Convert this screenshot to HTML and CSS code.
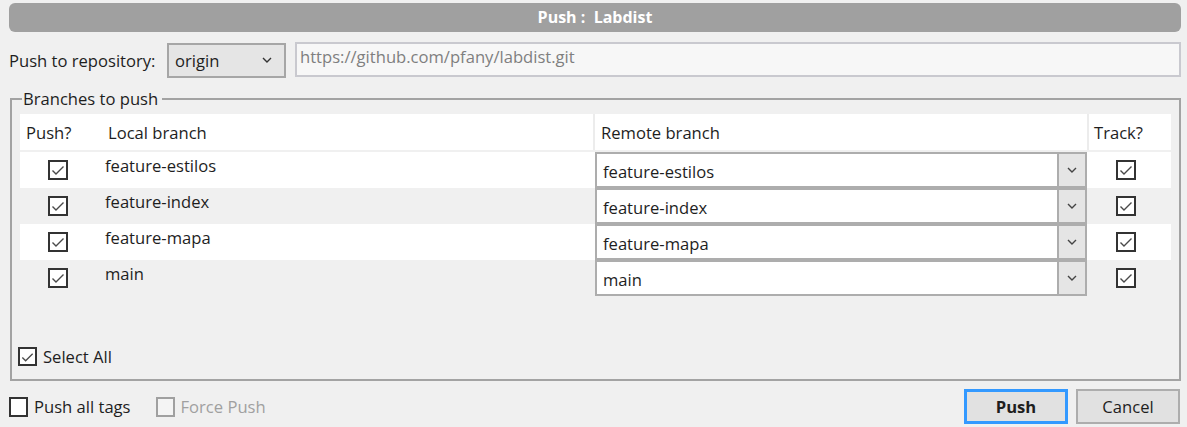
FILE: index.html
```html
<!DOCTYPE html>
<html>
<head>
<meta charset="utf-8">
<link rel="stylesheet" href="styles.css">
</head>
<body>
<div class="dialog">
  <div class="titlebar">Push :&nbsp; Labdist</div>

  <div class="repo-row">
    <span class="repo-label">Push to repository:</span>
    <div class="combo repo-combo">
      <span class="combo-text">origin</span>
      <svg class="chev" width="10" height="6" viewBox="0 0 10 6"><polyline points="1,1 5,5 9,1" fill="none" stroke="#333" stroke-width="1.4"/></svg>
    </div>
    <div class="url">https://github.com/pfany/labdist.git</div>
  </div>

  <fieldset class="group">
    <legend class="legend">Branches to push</legend>
    <div class="table">
      <div class="hrow">
        <div class="hcell c-push">Push?</div>
        <div class="hcell c-local">Local branch</div>
        <div class="hcell c-remote">Remote branch</div>
        <div class="hcell c-track">Track?</div>
      </div>

      <div class="row">
        <div class="cell c-push"><span class="cb checked"><svg viewBox="0 0 16 16"><polyline points="2.5,8.5 6,12 13.5,4.5" fill="none" stroke="#4a4a4a" stroke-width="1.4"/></svg></span></div>
        <div class="cell c-local"><span class="local-name">feature-estilos</span></div>
        <div class="cell c-remote"><div class="rcombo"><span class="rtext">feature-estilos</span><span class="rbtn"><svg width="10" height="6" viewBox="0 0 10 6"><polyline points="1,1 5,5 9,1" fill="none" stroke="#444" stroke-width="1.4"/></svg></span></div></div>
        <div class="cell c-track"><span class="cb checked"><svg viewBox="0 0 16 16"><polyline points="2.5,8.5 6,12 13.5,4.5" fill="none" stroke="#4a4a4a" stroke-width="1.4"/></svg></span></div>
      </div>

      <div class="row alt">
        <div class="cell c-push"><span class="cb checked"><svg viewBox="0 0 16 16"><polyline points="2.5,8.5 6,12 13.5,4.5" fill="none" stroke="#4a4a4a" stroke-width="1.4"/></svg></span></div>
        <div class="cell c-local"><span class="local-name">feature-index</span></div>
        <div class="cell c-remote"><div class="rcombo"><span class="rtext">feature-index</span><span class="rbtn"><svg width="10" height="6" viewBox="0 0 10 6"><polyline points="1,1 5,5 9,1" fill="none" stroke="#444" stroke-width="1.4"/></svg></span></div></div>
        <div class="cell c-track"><span class="cb checked"><svg viewBox="0 0 16 16"><polyline points="2.5,8.5 6,12 13.5,4.5" fill="none" stroke="#4a4a4a" stroke-width="1.4"/></svg></span></div>
      </div>

      <div class="row">
        <div class="cell c-push"><span class="cb checked"><svg viewBox="0 0 16 16"><polyline points="2.5,8.5 6,12 13.5,4.5" fill="none" stroke="#4a4a4a" stroke-width="1.4"/></svg></span></div>
        <div class="cell c-local"><span class="local-name">feature-mapa</span></div>
        <div class="cell c-remote"><div class="rcombo"><span class="rtext">feature-mapa</span><span class="rbtn"><svg width="10" height="6" viewBox="0 0 10 6"><polyline points="1,1 5,5 9,1" fill="none" stroke="#444" stroke-width="1.4"/></svg></span></div></div>
        <div class="cell c-track"><span class="cb checked"><svg viewBox="0 0 16 16"><polyline points="2.5,8.5 6,12 13.5,4.5" fill="none" stroke="#4a4a4a" stroke-width="1.4"/></svg></span></div>
      </div>

      <div class="row alt">
        <div class="cell c-push"><span class="cb checked"><svg viewBox="0 0 16 16"><polyline points="2.5,8.5 6,12 13.5,4.5" fill="none" stroke="#4a4a4a" stroke-width="1.4"/></svg></span></div>
        <div class="cell c-local"><span class="local-name">main</span></div>
        <div class="cell c-remote"><div class="rcombo"><span class="rtext">main</span><span class="rbtn"><svg width="10" height="6" viewBox="0 0 10 6"><polyline points="1,1 5,5 9,1" fill="none" stroke="#444" stroke-width="1.4"/></svg></span></div></div>
        <div class="cell c-track"><span class="cb checked"><svg viewBox="0 0 16 16"><polyline points="2.5,8.5 6,12 13.5,4.5" fill="none" stroke="#4a4a4a" stroke-width="1.4"/></svg></span></div>
      </div>
    </div>

    <div class="select-all">
      <span class="cb checked"><svg viewBox="0 0 16 16"><polyline points="2.5,8.5 6,12 13.5,4.5" fill="none" stroke="#4a4a4a" stroke-width="1.4"/></svg></span>
      <span class="cb-label">Select All</span>
    </div>
  </fieldset>

  <div class="bottom">
    <div class="opt">
      <span class="cb"></span>
      <span class="cb-label">Push all tags</span>
    </div>
    <div class="opt disabled">
      <span class="cb"></span>
      <span class="cb-label">Force Push</span>
    </div>
    <div class="spacer"></div>
    <div class="btn primary">Push</div>
    <div class="btn">Cancel</div>
  </div>
</div>
</body>
</html>
```

FILE: styles.css
```css
* { box-sizing: border-box; }
html, body {
  margin: 0;
  padding: 0;
  background: #f0f0f0;
}
body {
  font-family: "Open Sans", "Noto Sans", "Liberation Sans", sans-serif;
  font-size: 16.6px;
  color: #1e1e1e;
  width: 1187px;
  height: 427px;
  overflow: hidden;
}
.dialog {
  padding: 3px 6px 0 9px;
}
.titlebar {
  height: 29px;
  background: #a0a0a0;
  border-radius: 6px;
  color: #ffffff;
  font-weight: 700;
  font-size: 16px;
  text-align: center;
  line-height: 29px;
}
.repo-row {
  display: flex;
  align-items: center;
  margin-top: 9px;
  height: 36px;
}
.repo-label {
  width: 158px;
  white-space: nowrap;
  padding-top: 2px;
}
.combo {
  display: flex;
  align-items: center;
  justify-content: space-between;
  height: 35px;
  border: 2px solid #a6a6a6;
  background: #e5e5e5;
  padding: 0 12px 0 6px;
}
.repo-combo {
  width: 119px;
  margin-top: 2px;
}
.url {
  flex: 1;
  margin-left: 9px;
  height: 35px;
  border: 2px solid #c9c9cf;
  background: #f7f7f7;
  color: #7f7f7f;
  padding: 1px 3px 0;
  line-height: 24px;
}
.group {
  margin: 13px 0 0 1px;
  border: 2px solid #a3a3a3;
  padding: 6px 8px 11px 6px;
  min-width: 0;
}
.legend {
  padding: 0 4px 0 1px;
  margin-left: 4px;
  line-height: 18px;
}
.table {
  margin-left: 2px;
}
.hrow, .row {
  display: grid;
  grid-template-columns: 76px 497px 494px 83px;
  height: 36px;
}
.hrow {
  background: #ffffff;
  margin-bottom: 2px;
}
.hcell {
  display: flex;
  align-items: center;
  white-space: nowrap;
}
.hrow .c-push { padding-left: 6px; }
.hrow .c-local { padding-left: 12px; }
.hrow .c-remote { padding-left: 6px; border-left: 2px solid #ececec; }
.hrow .c-track { padding-left: 5px; border-left: 2px solid #ececec; }
.row { background: #ffffff; }
.row.alt { background: #f0f0f0; }
.cell {
  display: flex;
  align-items: center;
  white-space: nowrap;
}
.cell.c-push, .cell.c-track { justify-content: center; }
.cell.c-track { padding-right: 7px; padding-left: 2px; }
.cell.c-local {
  align-items: flex-start;
  padding-left: 9px;
  padding-top: 2px;
}
.cell.c-remote { padding-left: 2px; }
.rcombo {
  flex: 1;
  height: 36px;
  display: flex;
  border: 2px solid #adadad;
  background: #ffffff;
}
.rtext {
  flex: 1;
  padding-left: 6px;
  display: flex;
  align-items: center;
  padding-top: 2px;
}
.rbtn {
  width: 28px;
  background: #e5e5e5;
  border-left: 2px solid #adadad;
  display: flex;
  align-items: center;
  justify-content: center;
}
.cb {
  width: 20px;
  height: 20px;
  border: 2px solid #333333;
  background: #ffffff;
  display: inline-flex;
  align-items: center;
  justify-content: center;
  flex: none;
}
.cb svg { width: 16px; height: 16px; }
.select-all {
  display: flex;
  align-items: center;
  margin-top: 49px;
  margin-left: 0;
}
.select-all .cb { width: 19px; height: 19px; }
.cb-label { margin-left: 6px; }
.bottom {
  display: flex;
  align-items: center;
  margin-top: 8px;
  padding-right: 1px;
}
.opt {
  display: flex;
  align-items: center;
  margin-right: 25px;
}
.opt .cb { width: 19px; height: 20px; }
.opt.disabled { color: #a0a0a0; }
.opt.disabled .cb { border-color: #a0a0a0; background: #f4f4f4; }
.spacer { flex: 1; }
.btn {
  width: 104px;
  height: 35px;
  border: 2px solid #adadad;
  background: #e1e1e1;
  display: flex;
  align-items: center;
  justify-content: center;
  margin-left: 8px;
}
.btn.primary {
  border: 3px solid #3399ff;
  font-weight: 700;
}
```
